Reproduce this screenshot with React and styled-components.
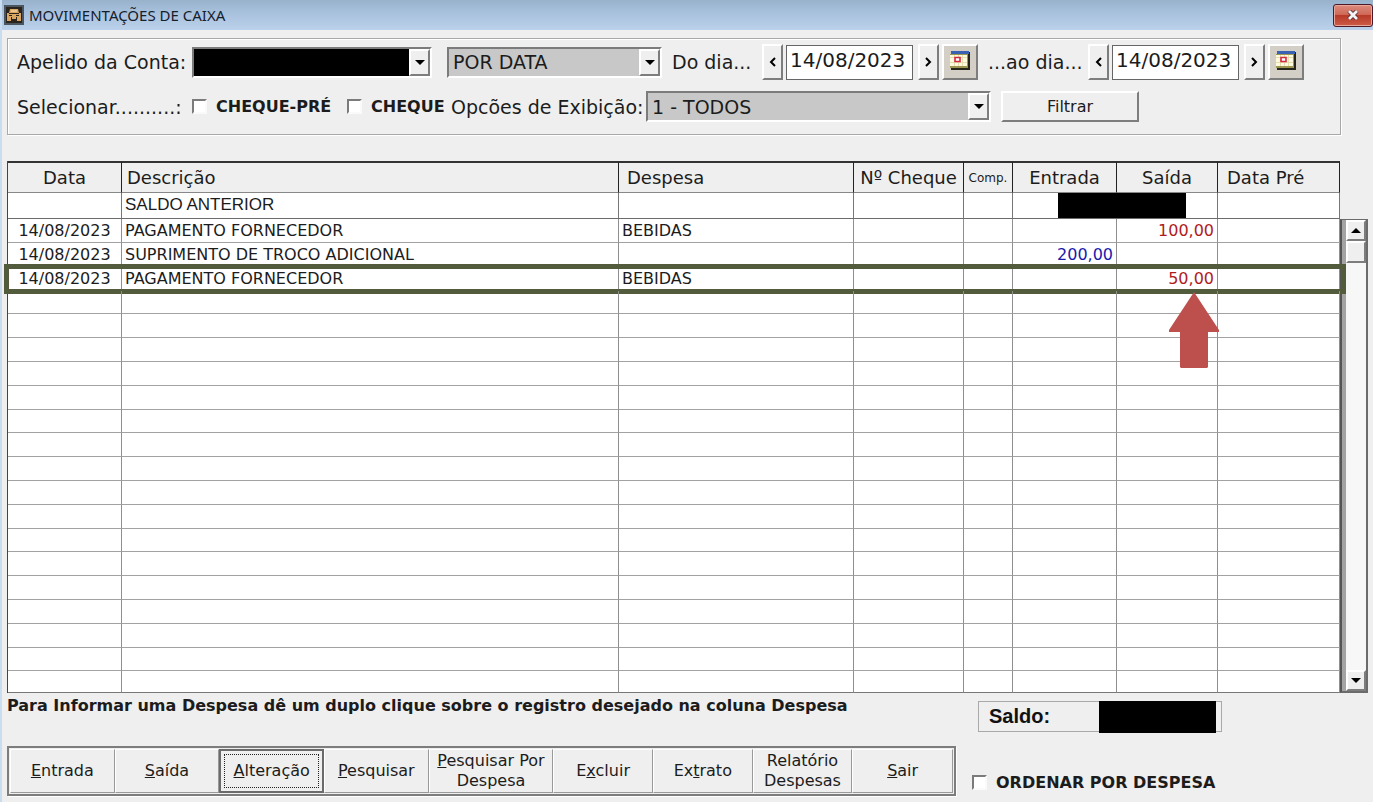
import React from "react";
import styled, { createGlobalStyle, css } from "styled-components";

const Global = createGlobalStyle`
  *, *::before, *::after { box-sizing: border-box; }
  body {
    margin: 0;
    background: #efefef;
    color: #1c1c1c;
    font-family: "DejaVu Sans", Verdana, sans-serif;
  }
  button, input, select { font-family: inherit; color: inherit; margin: 0; border-radius: 0; }
`;

const Window = styled.div`
  min-height: 100vh;
  min-width: 1280px;
  border-left: 2px solid #c9dcf0;
`;

const TitleBar = styled.header`
  display: flex;
  align-items: center;
  gap: 5px;
  height: 30px;
  padding-left: 2px;
  background: linear-gradient(#98b2cc, #a7c0dc 40%, #bbd1eb);
`;

const Title = styled.h1`
  flex: 1;
  margin: 0;
  font: 400 15px "Noto Sans", "Open Sans", sans-serif;
  color: #14202c;
`;

const CloseButton = styled.button`
  display: grid;
  place-items: center;
  width: 40px;
  height: 23px;
  padding: 0;
  border: 1px solid #4b1a24;
  border-radius: 3px;
  box-shadow: inset 0 0 0 1px #e9a79c;
  background: linear-gradient(#dc8b7c 0, #cf6a58 45%, #b83a28 50%, #cc5c45 100%);
`;

const Body = styled.main`
  padding: 8px 5px 0;
`;

const Filters = styled.form`
  display: flex;
  flex-direction: column;
  gap: 11px;
  height: 97px;
  margin-right: 27px;
  padding: 5px 9px;
  border: 1px solid #a9a9a9;
  box-shadow: inset 1px 1px #fff, 1px 1px #fff;
`;

const Line = styled.div`
  display: flex;
  align-items: center;
  height: ${(p) => p.$h}px;
`;

const DateGroup = styled(Line)`
  flex: none;
  margin-right: 10px;
`;

const Label = styled.label`
  flex: none;
  width: ${(p) => p.$w}px;
  font-size: ${(p) => (p.$bold ? 16 : 19)}px;
  font-weight: ${(p) => (p.$bold ? 700 : 400)};
  white-space: nowrap;
`;

const SelectBox = styled.span`
  position: relative;
  display: block;
  flex: none;
  width: ${(p) => p.$w}px;
  height: 31px;
  margin-right: ${(p) => p.$after}px;
  border: 2px solid;
  border-color: #7b7b7b #fff #fff #7b7b7b;
`;

const Select = styled.select`
  appearance: none;
  display: block;
  width: 100%;
  height: 100%;
  padding: 0 24px 0 4px;
  border: 0;
  outline: 0;
  background: ${(p) => (p.$hidden ? "#000" : "#c8c8c8")};
  font-size: 19px;
`;

const raised = css`
  border: 2px solid;
  border-color: #fff #7d7d7d #7d7d7d #fff;
  background: #efefef;
`;

const DropMark = styled.span`
  ${raised}
  position: absolute;
  top: 0;
  right: 0;
  bottom: 0;
  display: grid;
  place-items: center;
  width: 21px;
  pointer-events: none;
`;

const StepButton = styled.button`
  ${raised}
  flex: none;
  display: grid;
  place-items: center;
  width: 21px;
  height: 36px;
  padding: 0;
`;

const CalendarButton = styled(StepButton)`
  width: 36px;
  margin-left: 3px;
  padding-bottom: 4px;
  background: #d3cec6;
`;

const DateInput = styled.input`
  flex: none;
  width: 127px;
  height: 35px;
  margin: 0 5px 0 3px;
  padding: 0 3px 5px;
  border: 1px solid #666;
  background: #fff;
  font-size: 20px;
`;

const Check = styled.input`
  appearance: none;
  flex: none;
  width: 15px;
  height: 15px;
  margin: 0 9px 0 0;
  border: 2px solid;
  border-color: #7b7b7b #fafafa #fafafa #7b7b7b;
  background: #fff;
`;

const FilterButton = styled.button`
  ${raised}
  width: 138px;
  height: 31px;
  padding: 0;
  font-size: 16px;
`;

const GridArea = styled.section`
  display: flex;
  align-items: flex-end;
  margin-top: 26px;
`;

const Table = styled.table`
  flex: 1;
  width: 0;
  table-layout: fixed;
  border-collapse: separate;
  border-spacing: 0;
  border-left: 1px solid #444;
  background: #fff;
`;

const Th = styled.th`
  height: 32px;
  padding: ${(p) => (p.$left ? "0 0 0 " + p.$left + "px" : 0)};
  border-top: 2px solid #333;
  border-right: 1px solid #222;
  border-bottom: 1px solid #888;
  background: #efefef;
  font-size: ${(p) => (p.$small ? 12 : 18)}px;
  font-weight: 400;
  text-align: ${(p) => (p.$left ? "left" : "center")};
  white-space: nowrap;
`;

const Td = styled.td`
  padding: 0 3px;
  border-right: 1px solid #8f8f8f;
  border-bottom: 1px solid #a2a2a2;
  font-size: 16px;
  line-height: 20px;
  color: ${(p) => p.$color || "#1c1c1c"};
  text-align: ${(p) => p.$align || "left"};
  white-space: nowrap;
`;

const OpeningRow = styled.tr`
  height: 26px;
  td { border-bottom-color: #6b6b6b; border-right-color: #777; }
`;

const OpeningLabel = styled.span`
  display: block;
  height: 22px;
  font: 17px/20px "Liberation Sans", Arial, sans-serif;
`;

const Anchor = styled.div`
  position: relative;
  height: 25px;
`;

const HiddenTotal = styled.span`
  position: absolute;
  top: 0;
  left: 42px;
  width: 128px;
  height: 25px;
  background: #000;
`;

const Row = styled.tr`
  position: relative;
  height: 24px;
  &:nth-child(5n + 4) { height: 23px; }
  &:last-child { height: 22px; }
  &:last-child td { border-bottom-color: #777; }
`;

const Highlight = styled.span`
  position: absolute;
  inset: -3px -6px -3px -4px;
  border: 5px solid #525b3c;
  pointer-events: none;
`;

const Pointer = styled.svg`
  position: absolute;
  top: 25px;
  right: 121px;
  z-index: 1;
`;

const ScrollBar = styled.div`
  display: flex;
  flex-direction: column;
  width: 28px;
  height: 474px;
  border: 2px solid #6b6b6b;
  border-top-width: 1px;
  border-left-color: #555;
  box-shadow: inset 4px 0 #a3a3a3;
  padding-left: 4px;
  background: #f7f7f7;
`;

const ScrollButton = styled.button`
  ${raised}
  display: grid;
  place-items: center;
  height: 21px;
  padding: 0;
`;

const Thumb = styled.div`
  ${raised}
  height: 22px;
`;

const Track = styled.div`
  flex: 1;
`;

const Footer = styled.footer`
  display: flex;
`;

const FooterMain = styled.div`
  flex: none;
  width: 949px;
`;

const Hint = styled.p`
  height: 53px;
  margin: 0;
  padding-top: 3px;
  font-size: 16px;
  line-height: 20px;
  font-weight: 700;
  white-space: nowrap;
`;

const Toolbar = styled.nav`
  display: grid;
  grid-template-columns: 105fr 105fr 105fr 105fr 125fr 100fr 100fr 100fr 101fr;
  height: 50px;
  border: 2px solid #7d7d7d;
  padding: 1px;
  box-shadow: 1px 1px #fff;
`;

const Action = styled.button`
  padding: 0;
  border: 1px solid;
  border-color: #fff #999 #999 #fff;
  background: #efefef;
  font-size: 16px;
  line-height: 20px;
  white-space: pre-line;
  ${(p) =>
    p.$active &&
    css`
      border: 2px solid #6b6b6b;
      outline: 1px dotted #222;
      outline-offset: -6px;
    `}
`;

const FooterSide = styled.div`
  flex: 1;
  display: flex;
  flex-direction: column;
  align-items: flex-start;
  gap: 41px;
  padding: 8px 0 0 16px;
`;

const Balance = styled.div`
  display: flex;
  align-items: center;
  justify-content: space-between;
  width: 244px;
  height: 31px;
  margin-left: 6px;
  padding: 0 5px 0 10px;
  border: 1px solid #a9a9a9;
  font: 700 20px "Liberation Sans", Arial, sans-serif;
  color: #111;
`;

const HiddenBalance = styled.span`
  width: 117px;
  height: 32px;
  background: #000;
`;

const Triangle = ({ up }) => (
  <svg width="10" height="5" viewBox="0 0 10 5" aria-hidden="true">
    <path d={up ? "M5 0 10 5H0Z" : "M0 0H10L5 5Z"} fill="#000" />
  </svg>
);

const Chevron = ({ right }) => (
  <svg width="8" height="10" viewBox="0 0 8 10" fill="none" stroke="#000" strokeWidth="2" aria-hidden="true">
    <path d={right ? "M1 1 5 5 1 9" : "M6 1 2 5 6 9"} />
  </svg>
);

const Calendar = () => (
  <svg width="20" height="19" viewBox="0 0 20 19" aria-hidden="true">
    <path d="M2 1H20V19H1V17Z" fill="#25241a" />
    <path d="M0 3H18V17H0Z" fill="#9c9650" />
    <path d="M0 4H17V15H0Z" fill="#fff9e0" />
    <path d="M1 0H19V3H1Z" fill="#3a62b4" />
    <path d="M4.500 4V15M8.500 4V15M12.500 4V15M0 6.500H17M0 11.500H17" stroke="#e4dfae" />
    <path d="M5 6.500H10V10.500H5Z" fill="#fff" stroke="#d42a40" strokeWidth="1.600" />
  </svg>
);

const AppIcon = () => (
  <svg width="20" height="20" viewBox="0 0 20 20" aria-hidden="true">
    <path d="M1 1H19V19H1Z" fill="#2b241c" stroke="#4a5560" strokeWidth="2" />
    <path d="M6 4H14L15 8H5ZM3 8H17V12H3ZM3 12H7V16H3ZM13 12H17V16H13ZM8 12H12V14H8Z" fill="#d9a562" />
    <path d="M7 6H13" stroke="#fbe3b8" />
    <path d="M5 8.500H15M5 10.500H8M12 10.500H15" stroke="#2b241c" />
  </svg>
);

const DateField = ({ id, label, w }) => (
  <DateGroup $h={36}>
    <Label htmlFor={id} $w={w}>{label}</Label>
    <StepButton type="button" aria-label="Dia anterior"><Chevron /></StepButton>
    <DateInput id={id} defaultValue="14/08/2023" />
    <StepButton type="button" aria-label="Dia seguinte"><Chevron right /></StepButton>
    <CalendarButton type="button" aria-label="Abrir calendário"><Calendar /></CalendarButton>
  </DateGroup>
);

const columns = [
  { name: "Data", w: 114 },
  { name: "Descrição", left: 5 },
  { name: "Despesa", w: 235, left: 8 },
  { name: "Nº Cheque", w: 110 },
  { name: "Comp.", w: 49, small: true },
  { name: "Entrada", w: 104 },
  { name: "Saída", w: 101 },
  { name: "Data Pré", w: 122, left: 9 },
];

const entries = [
  { date: "14/08/2023", text: "PAGAMENTO FORNECEDOR", expense: "BEBIDAS", out: "100,00" },
  { date: "14/08/2023", text: "SUPRIMENTO DE TROCO ADICIONAL", in: "200,00" },
  { date: "14/08/2023", text: "PAGAMENTO FORNECEDOR", expense: "BEBIDAS", out: "50,00", marked: true },
];
const rows = [...entries, ...Array.from({ length: 17 }, () => ({}))];

const actions = [
  { key: "E", after: "ntrada" },
  { key: "S", after: "aída" },
  { key: "A", after: "lteração", active: true },
  { key: "P", after: "esquisar" },
  { key: "P", after: "esquisar Por\nDespesa" },
  { before: "E", key: "x", after: "cluir" },
  { before: "Ex", key: "t", after: "rato" },
  { before: "Relatório\nDespesas" },
  { key: "S", after: "air" },
];

export default function App() {
  return (
    <>
      <Global />
      <Window>
        <TitleBar>
          <AppIcon />
          <Title>MOVIMENTAÇÕES DE CAIXA</Title>
          <CloseButton aria-label="Fechar">
            <svg width="14" height="10" viewBox="0 0 14 10" aria-hidden="true">
              <path d="M3 1 11 9M11 1 3 9" stroke="#5a3038" strokeWidth="4.500" />
              <path d="M3 1 11 9M11 1 3 9" stroke="#f4f4f4" strokeWidth="2.800" />
            </svg>
          </CloseButton>
        </TitleBar>
        <Body>
          <Filters onSubmit={(e) => e.preventDefault()}>
            <Line $h={36}>
              <Label htmlFor="account" $w={175}>Apelido da Conta:</Label>
              <SelectBox $w={240} $after={15}>
                <Select id="account" $hidden />
                <DropMark><Triangle /></DropMark>
              </SelectBox>
              <SelectBox $w={215} $after={10}>
                <Select aria-label="Tipo de filtro"><option>POR DATA</option></Select>
                <DropMark><Triangle /></DropMark>
              </SelectBox>
              <DateField id="from" label="Do dia..." w={90} />
              <DateField id="to" label="...ao dia..." w={100} />
            </Line>
            <Line $h={31}>
              <Label as="span" $w={175}>Selecionar..........:</Label>
              <Check type="checkbox" id="pre" />
              <Label htmlFor="pre" $w={131} $bold>CHEQUE-PRÉ</Label>
              <Check type="checkbox" id="cheque" />
              <Label htmlFor="cheque" $w={80} $bold>CHEQUE</Label>
              <Label htmlFor="view" $w={195}>Opcões de Exibição:</Label>
              <SelectBox $w={345} $after={10}>
                <Select id="view"><option>1 - TODOS</option></Select>
                <DropMark><Triangle /></DropMark>
              </SelectBox>
              <FilterButton>Filtrar</FilterButton>
            </Line>
          </Filters>

          <GridArea>
            <Table>
              <colgroup>
                {columns.map((c) => <col key={c.name} width={c.w} />)}
              </colgroup>
              <thead>
                <tr>
                  {columns.map((c) => (
                    <Th key={c.name} scope="col" $left={c.left} $small={c.small}>{c.name}</Th>
                  ))}
                </tr>
                <OpeningRow>
                  <Td />
                  <Td><OpeningLabel>SALDO ANTERIOR</OpeningLabel></Td>
                  <Td />
                  <Td />
                  <Td />
                  <Td colSpan={2}><Anchor><HiddenTotal /></Anchor></Td>
                  <Td />
                </OpeningRow>
              </thead>
              <tbody>
                {rows.map((r, i) => (
                  <Row key={i}>
                    <Td $align="center">{r.date}</Td>
                    <Td>{r.text}</Td>
                    <Td>{r.expense}</Td>
                    <Td />
                    <Td />
                    <Td $align="right" $color="#1a1aae">{r.in}</Td>
                    <Td $align="right" $color="#b01c1c">{r.out}</Td>
                    <Td>
                      {r.marked && (
                        <>
                          <Highlight />
                          <Pointer width="50" height="77" viewBox="0 0 50 77" aria-hidden="true">
                            <path d="M25 0 50 38V40H39V75L38 76H12L11 75V40H0V38Z" fill="#bd504d" />
                          </Pointer>
                        </>
                      )}
                    </Td>
                  </Row>
                ))}
              </tbody>
            </Table>
            <ScrollBar>
              <ScrollButton aria-label="Rolar para cima"><Triangle up /></ScrollButton>
              <Thumb />
              <Track />
              <ScrollButton aria-label="Rolar para baixo"><Triangle /></ScrollButton>
            </ScrollBar>
          </GridArea>

          <Footer>
            <FooterMain>
              <Hint>Para Informar uma Despesa dê um duplo clique sobre o registro desejado na coluna Despesa</Hint>
              <Toolbar>
                {actions.map((a, i) => (
                  <Action key={i} $active={a.active}>
                    {a.before}{a.key && <u>{a.key}</u>}{a.after}
                  </Action>
                ))}
              </Toolbar>
            </FooterMain>
            <FooterSide>
              <Balance>Saldo:<HiddenBalance /></Balance>
              <Line $h={18}>
                <Check type="checkbox" id="order" />
                <Label htmlFor="order" $bold>ORDENAR POR DESPESA</Label>
              </Line>
            </FooterSide>
          </Footer>
        </Body>
      </Window>
    </>
  );
}
